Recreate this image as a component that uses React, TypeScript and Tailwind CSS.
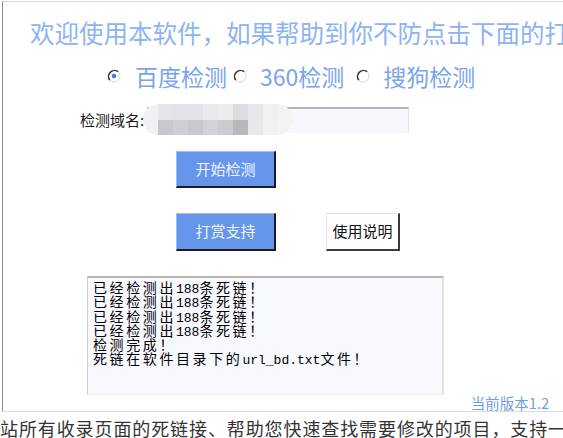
import React from "react";

const topRow = ["#f1f1f3", "#e5e5e9", "#e3e3e7", "#e3e3e7", "#eaeaed", "#ececef", "#dcdce0", "#e6e6ea", "#f0f0f2", "#f3f3f5"];
const bottomRow = ["#f1f1f3", "#c8c8cc", "#cfcfd3", "#c9c9cd", "#d3d3d7", "#cbcbd0", "#b8b7bc", "#e8e8ea", "#f1f1f3", "#f3f3f5"];

function Radio({ checked }: { checked?: boolean }) {
  return (
    <svg width="14" height="14" viewBox="0 0 14 14" className="shrink-0">
      <circle cx="7" cy="7" r="6" fill="#fff" stroke="#d4d4d4" strokeWidth="1" />
      <path d="M2.8 11.2 A6 6 0 0 1 11.2 2.8" fill="none" stroke="#2a2a2a" strokeWidth="1.4" />
      {checked && <circle cx="7" cy="7" r="2.3" fill="#3c7be8" />}
    </svg>
  );
}

// each line split into CJK / latin chunks so the latin keeps the narrow bitmap look
const logLines: string[][] = [
  ["已经检测出", "188", "条死链！"],
  ["已经检测出", "188", "条死链！"],
  ["已经检测出", "188", "条死链！"],
  ["已经检测出", "188", "条死链！"],
  ["检测完成！"],
  ["死链在软件目录下的", "url_bd.txt", "文件！"],
];

export default function App() {
  return (
    <div
      className="w-[563px] h-[438px] overflow-hidden bg-white"
      style={{ fontFamily: '"Noto Sans CJK SC", "Noto Sans", sans-serif' }}
    >
      {/* window frame */}
      <div className="ml-[2px] mt-[1px] h-[411px] flex flex-col border-t border-l border-b border-t-[#d8d8d8] border-l-[#8c8c8c] border-b-[#dcdcdc]">
        {/* title */}
        <div className="pt-[16px] pl-[27px] h-[46px] text-[24.5px] leading-[30px] text-[#8db3f5] whitespace-nowrap">
          欢迎使用本软件，如果帮助到你不防点击下面的打赏支持
        </div>

        {/* engines */}
        <div className="mt-[13px] h-[30px] pl-[104px] flex items-center text-[23px] text-[#7aa4ee] whitespace-nowrap">
          <Radio checked />
          <span className="ml-[14px]">百度检测</span>
          <span className="ml-[6px]">
            <Radio />
          </span>
          <span className="ml-[13px]">360检测</span>
          <span className="ml-[12px]">
            <Radio />
          </span>
          <span className="ml-[13px]">搜狗检测</span>
        </div>

        {/* domain input */}
        <div className="mt-[16px] h-[26px] pl-[77px] flex items-center">
          <span className="w-[67px] text-[15px] text-[#1a1a1a] whitespace-nowrap">检测域名:</span>
          <div className="relative w-[262px] h-[26px] bg-[#f7f8fd] border-t-2 border-t-[#b4b4b4] border-r border-r-[#e2e2e8]">
            <div className="absolute -left-[4px] -top-[5px] w-[150px] h-[31px] rounded-full overflow-hidden flex flex-col">
              <div className="flex flex-1">
                {topRow.map((c, i) => (
                  <div key={i} className="flex-1" style={{ background: c }} />
                ))}
              </div>
              <div className="flex flex-1">
                {bottomRow.map((c, i) => (
                  <div key={i} className="flex-1" style={{ background: c }} />
                ))}
              </div>
            </div>
          </div>
        </div>

        {/* start button */}
        <div className="mt-[18px] h-[37px] pl-[173px] flex">
          <button className="w-[100px] h-full bg-[#6596ec] border-t border-l border-t-[#9bbcf3] border-l-[#9bbcf3] border-r-2 border-b-2 border-r-[#1c1c1c] border-b-[#1c1c1c] text-[15px] text-[#eef3fd]">
            开始检测
          </button>
        </div>

        {/* donate + help */}
        <div className="mt-[25px] h-[38px] pl-[173px] flex">
          <button className="w-[100px] h-full bg-[#6596ec] border-t border-l border-t-[#9bbcf3] border-l-[#9bbcf3] border-r-2 border-b-2 border-r-[#1c1c1c] border-b-[#1c1c1c] text-[15px] text-[#eef3fd]">
            打赏支持
          </button>
          <button className="ml-[50px] w-[74px] h-full bg-white border-t border-l border-t-[#e4e4e4] border-l-[#e4e4e4] border-r-2 border-b-2 border-r-[#3a3a3a] border-b-[#3a3a3a] text-[15px] text-[#111]">
            使用说明
          </button>
        </div>

        {/* log */}
        <div className="mt-[25px] ml-[84px] w-[357px] h-[119px] bg-[#f8f9fe] border-t-2 border-t-[#b6b6b6] border-l border-l-[#d0d0d4] border-r-2 border-r-[#e2e2ea] border-b border-b-[#ececf0] pl-[5px] pt-[1px]">
          {logLines.map((parts, i) => (
            <div key={i} className="h-[14.3px] leading-[14.3px] text-black whitespace-nowrap">
              {parts.map((p, j) =>
                /^[\x00-\x7f]+$/.test(p) ? (
                  <span key={j} className="text-[13px]" style={{ fontFamily: '"Liberation Mono", monospace' }}>
                    {p}
                  </span>
                ) : (
                  <span key={j} className="text-[14px] tracking-[2.6px]">
                    {p}
                  </span>
                )
              )}
            </div>
          ))}
        </div>

        {/* version */}
        <div className="h-[16px] pr-[14px] text-right text-[14.5px] leading-[16px] text-[#6f9ee9]">当前版本1.2</div>
      </div>

      {/* page text below */}
      <div className="mt-[4px] text-[18px] leading-[24px] tracking-[0.9px] text-[#333] whitespace-nowrap">
        站所有收录页面的死链接、帮助您快速查找需要修改的项目，支持一键导出
      </div>
    </div>
  );
}
